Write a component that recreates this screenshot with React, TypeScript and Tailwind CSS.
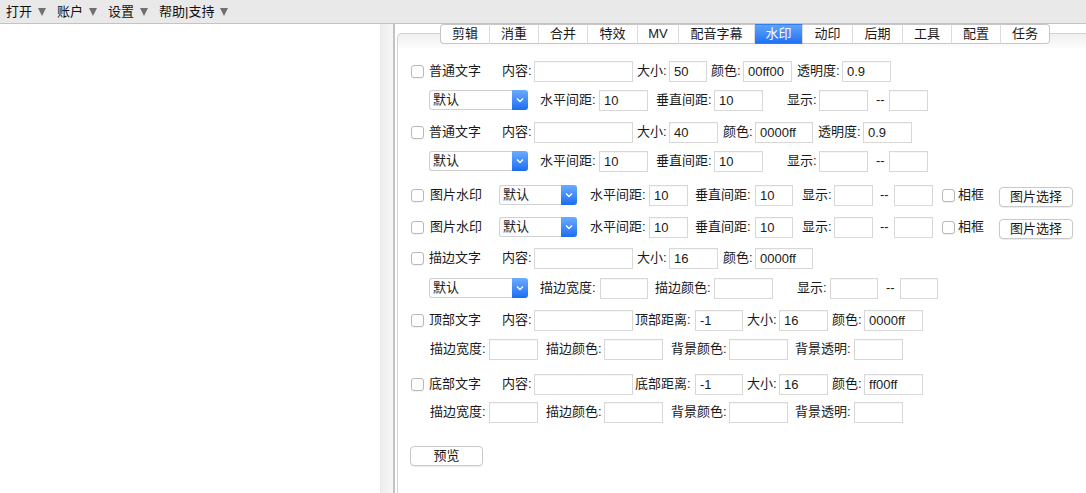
import React from "react";

const Check = ({ className = "" }: { className?: string }) => (
  <span
    className={`h-[13px] w-[13px] shrink-0 rounded-[3px] border border-[#b8b8b8] bg-white shadow-[0_1px_1px_rgba(0,0,0,0.05)] ${className}`}
  />
);

const Label = ({ text, className = "" }: { text: string; className?: string }) => (
  <span className={`shrink-0 whitespace-nowrap text-[#1a1a1a] ${className}`}>{text}</span>
);

const Field = ({ value = "", className = "" }: { value?: string; className?: string }) => (
  <input
    readOnly
    value={value}
    className={`h-[21px] shrink-0 border border-[#d8d8d8] bg-white px-[4px] text-[13px] text-[#1a1a1a] shadow-[inset_0_1px_0_rgba(0,0,0,0.03)] outline-none ${className}`}
  />
);

const Select = ({ className = "" }: { className?: string }) => (
  <div className={`flex h-[20px] shrink-0 ${className}`}>
    <span className="flex-1 rounded-l-[3px] border border-r-0 border-[#d0d0d0] bg-white pl-[3px] text-[13px] leading-[18px] text-[#1a1a1a]">
      默认
    </span>
    <span className="flex w-[16px] items-center justify-center rounded-r-[3px] bg-gradient-to-b from-[#6aacfd] to-[#1a6cf3]">
      <svg width="8" height="6" viewBox="0 0 8 6">
        <path d="M1 1.5 L4 4.5 L7 1.5" fill="none" stroke="white" strokeWidth="1.4" />
      </svg>
    </span>
  </div>
);

const Button = ({ text, className = "" }: { text: string; className?: string }) => (
  <button
    className={`h-[20px] shrink-0 rounded-[4px] border border-[#c9c9c9] bg-white text-[13px] leading-[18px] text-[#1a1a1a] shadow-[0_1px_1px_rgba(0,0,0,0.08)] ${className}`}
  >
    {text}
  </button>
);

const Arrow = () => (
  <svg width="8" height="9" viewBox="0 0 8 9" className="ml-[6px] shrink-0">
    <path d="M0 1 H8 L4 9 Z" fill="#707070" />
  </svg>
);

const tabs: [string, string][] = [
  ["剪辑", "w-[50px]"],
  ["消重", "w-[49px]"],
  ["合并", "w-[49px]"],
  ["特效", "w-[50px]"],
  ["MV", "w-[41px]"],
  ["配音字幕", "w-[76px]"],
  ["水印", "w-[48px]"],
  ["动印", "w-[50px]"],
  ["后期", "w-[50px]"],
  ["工具", "w-[49px]"],
  ["配置", "w-[49px]"],
  ["任务", "w-[49px]"],
];

const Tabs = () => (
  <div className="relative z-10 ml-[45px] flex h-[20px]">
    {tabs.map(([t, w], i) => {
      const active = t === "水印";
      const first = i === 0;
      const last = i === tabs.length - 1;
      return (
        <div
          key={t}
          className={`flex items-center justify-center border-y text-[13px] ${w} ${
            active
              ? "border-[#2f7ef5] bg-gradient-to-b from-[#5ea3fb] to-[#1f71f4] text-white"
              : "border-[#c6c6c6] bg-white text-[#1a1a1a]"
          } ${first ? "rounded-l-[4px] border-l" : ""} ${
            last ? "rounded-r-[4px] border-r border-r-[#c6c6c6]" : "border-r border-r-[#dcdcdc]"
          }`}
        >
          {t}
        </div>
      );
    })}
  </div>
);

const TextRow = ({
  name,
  size,
  sizeW,
  colorLabelMl,
  color,
  colorW,
  alphaMl,
}: {
  name: string;
  size: string;
  sizeW: string;
  colorLabelMl: string;
  color: string;
  colorW: string;
  alphaMl: string;
}) => (
  <div className="flex h-[22px] items-center">
    <Check className="ml-[13px]" />
    <Label text={name} className="ml-[5px] w-[73px]" />
    <Label text="内容:" className="w-[32px]" />
    <Field className="w-[99px]" />
    <Label text="大小:" className="ml-[4px] w-[32px]" />
    <Field value={size} className={sizeW} />
    <Label text="颜色:" className={`${colorLabelMl} w-[32px]`} />
    <Field value={color} className={colorW} />
    <Label text="透明度:" className={`${alphaMl} w-[45px]`} />
    <Field value="0.9" className="w-[49px]" />
  </div>
);

const SpacingRow = () => (
  <div className="flex h-[22px] items-center">
    <Select className="ml-[31px] w-[99px]" />
    <Label text="水平间距:" className="ml-[12px] w-[59px]" />
    <Field value="10" className="w-[49px]" />
    <Label text="垂直间距:" className="ml-[8px] w-[58px]" />
    <Field value="10" className="w-[49px]" />
    <Label text="显示:" className="ml-[24px] w-[32px]" />
    <Field className="w-[49px]" />
    <Label text="--" className="ml-[8px] w-[13px]" />
    <Field className="w-[39px]" />
  </div>
);

const ImageRow = () => (
  <div className="flex h-[22px] items-center">
    <Check className="ml-[13px]" />
    <Label text="图片水印" className="ml-[6px] w-[69px]" />
    <Select className="w-[78px]" />
    <Label text="水平间距:" className="ml-[13px] w-[59px]" />
    <Field value="10" className="w-[39px]" />
    <Label text="垂直间距:" className="ml-[7px] w-[60px]" />
    <Field value="10" className="w-[38px]" />
    <Label text="显示:" className="ml-[9px] w-[32px]" />
    <Field className="w-[39px]" />
    <Label text="--" className="ml-[7px] w-[14px]" />
    <Field className="w-[39px]" />
    <Check className="ml-[9px]" />
    <Label text="相框" className="ml-[3px] w-[26px]" />
    <Button text="图片选择" className="ml-[15px] mt-[3px] w-[74px]" />
  </div>
);

const PosRow = ({ name, dist, color }: { name: string; dist: string; color: string }) => (
  <div className="flex h-[22px] items-center">
    <Check className="ml-[13px]" />
    <Label text={name} className="ml-[5px] w-[73px]" />
    <Label text="内容:" className="w-[32px]" />
    <Field className="w-[99px]" />
    <Label text={dist} className="ml-[2px] w-[60px]" />
    <Field value="-1" className="w-[48px]" />
    <Label text="大小:" className="ml-[4px] w-[32px]" />
    <Field value="16" className="w-[49px]" />
    <Label text="颜色:" className="ml-[4px] w-[32px]" />
    <Field value={color} className="w-[59px]" />
  </div>
);

const StrokeRow = () => (
  <div className="flex h-[22px] items-center">
    <Label text="描边宽度:" className="ml-[32px] w-[59px]" />
    <Field className="w-[49px]" />
    <Label text="描边颜色:" className="ml-[8px] w-[58px]" />
    <Field className="w-[59px]" />
    <Label text="背景颜色:" className="ml-[8px] w-[58px]" />
    <Field className="w-[59px]" />
    <Label text="背景透明:" className="ml-[7px] w-[59px]" />
    <Field className="w-[49px]" />
  </div>
);

export default function App() {
  return (
    <div className="flex h-screen flex-col overflow-hidden bg-white font-['Liberation_Sans','Noto_Sans_CJK_SC',sans-serif] text-[13px] text-[#1a1a1a]">
      <div className="flex h-[24px] shrink-0 items-center border-b border-[#c4c4c4] bg-[#e9e9e9] pl-[6px] text-[13px] text-[#111]">
        <span>打开</span>
        <Arrow />
        <span className="ml-[11px]">账户</span>
        <Arrow />
        <span className="ml-[11px]">设置</span>
        <Arrow />
        <span className="ml-[11px]">帮助|支持</span>
        <Arrow />
      </div>

      <div className="flex min-h-0 flex-1">
        <div className="w-[380px] shrink-0 bg-white" />
        <div className="w-[13px] shrink-0 bg-gradient-to-r from-[#ececec] to-[#f7f7f7]" />
        <div className="w-[2px] shrink-0 bg-[#c2c2c2]" />

        <div className="flex min-w-0 flex-1 flex-col bg-white">
          <Tabs />
          <div className="ml-[2px] -mt-[11px] flex-1 rounded-tl-[5px] border-l border-t border-[#d2d2d2] bg-gradient-to-b from-[#efefef] from-[0px] to-white to-[16px] pt-[26px]">
            <TextRow
              name="普通文字"
              size="50"
              sizeW="w-[38px]"
              colorLabelMl="ml-[4px]"
              color="00ff00"
              colorW="w-[49px]"
              alphaMl="ml-[5px]"
            />
            <div className="mt-[7px]">
              <SpacingRow />
            </div>
            <div className="mt-[10px]">
              <TextRow
                name="普通文字"
                size="40"
                sizeW="w-[49px]"
                colorLabelMl="ml-[5px]"
                color="0000ff"
                colorW="w-[58px]"
                alphaMl="ml-[5px]"
              />
            </div>
            <div className="mt-[7px]">
              <SpacingRow />
            </div>
            <div className="mt-[12px]">
              <ImageRow />
            </div>
            <div className="mt-[10px]">
              <ImageRow />
            </div>

            <div className="mt-[9px] flex h-[22px] items-center">
              <Check className="ml-[13px]" />
              <Label text="描边文字" className="ml-[5px] w-[73px]" />
              <Label text="内容:" className="w-[32px]" />
              <Field className="w-[99px]" />
              <Label text="大小:" className="ml-[4px] w-[32px]" />
              <Field value="16" className="w-[49px]" />
              <Label text="颜色:" className="ml-[5px] w-[32px]" />
              <Field value="0000ff" className="w-[58px]" />
            </div>

            <div className="mt-[8px] flex h-[22px] items-center">
              <Select className="ml-[31px] w-[99px]" />
              <Label text="描边宽度:" className="ml-[12px] w-[60px]" />
              <Field className="w-[48px]" />
              <Label text="描边颜色:" className="ml-[7px] w-[59px]" />
              <Field className="w-[59px]" />
              <Label text="显示:" className="ml-[24px] w-[33px]" />
              <Field className="w-[48px]" />
              <Label text="--" className="ml-[8px] w-[14px]" />
              <Field className="w-[38px]" />
            </div>

            <div className="mt-[10px]">
              <PosRow name="顶部文字" dist="顶部距离:" color="0000ff" />
            </div>
            <div className="mt-[7px]">
              <StrokeRow />
            </div>
            <div className="mt-[13px]">
              <PosRow name="底部文字" dist="底部距离:" color="ff00ff" />
            </div>
            <div className="mt-[6px]">
              <StrokeRow />
            </div>

            <div className="mt-[23px] flex">
              <Button text="预览" className="ml-[12px] w-[73px]" />
            </div>
          </div>
        </div>
      </div>
    </div>
  );
}
